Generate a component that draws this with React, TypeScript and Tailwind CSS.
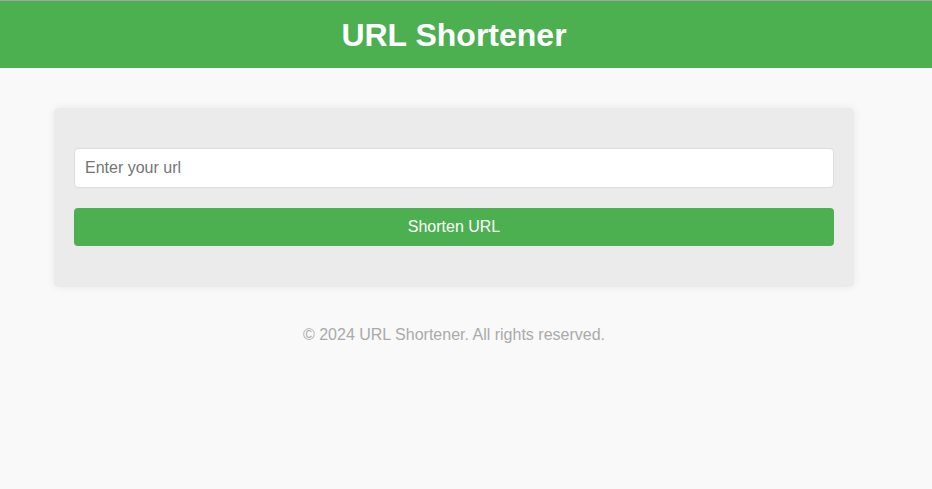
import React, { useState } from 'react'

const App = () => {
  const [url, setUrl] = useState('')

  return (
    <div className="min-h-[489px] bg-[#f9f9f9] font-['Liberation_Sans',Arial,sans-serif]">
      <header className="border-t border-[#a3a3a3] bg-[#4caf50]">
        <div className="w-[908px] h-[67px] flex items-center justify-center">
          <h1 className="text-[32px] font-bold text-white leading-none">URL Shortener</h1>
        </div>
      </header>

      <div className="w-[908px] flex flex-col items-center">
        <div className="mt-[40px] w-[800px] bg-[#ebebeb] rounded-[5px] shadow-[0_0_8px_rgba(0,0,0,0.07)] px-5 pt-10 pb-[41px]">
          <form className="flex flex-col gap-5" onSubmit={(e) => e.preventDefault()}>
            <input
              type="text"
              value={url}
              onChange={(e) => setUrl(e.target.value)}
              placeholder="Enter your url"
              className="h-[40px] w-full bg-white border border-[#dddddd] rounded-[4px] px-[10px] text-base text-[#333] placeholder:text-[#757575] outline-none"
            />
            <button
              type="submit"
              className="h-[38px] w-full bg-[#4caf50] text-white text-base rounded-[4px] cursor-pointer"
            >
              Shorten URL
            </button>
          </form>
        </div>

        <footer className="mt-[36px] text-base text-[#aaaaaa]">
          © 2024 URL Shortener. All rights reserved.
        </footer>
      </div>
    </div>
  )
}

export default App
